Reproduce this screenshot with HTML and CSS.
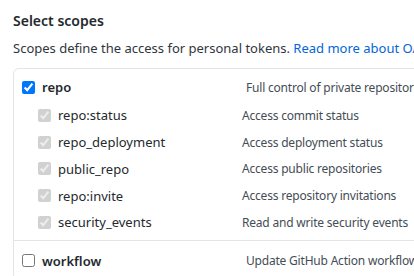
FILE: index.html
```html
<!DOCTYPE html>
<html lang="en">
<head>
  <meta charset="UTF-8">
  <meta name="viewport" content="width=device-width, initial-scale=1.0">
  <title>Select scopes</title>
  <link rel="stylesheet" href="styles.css">
</head>
<body>
  <h3 class="title">Select scopes</h3>
  <p class="note">Scopes define the access for personal tokens. <a href="#">Read more about OAuth scopes.</a></p>
  <div class="scopes">
    <div class="group">
      <div class="row top">
        <label class="name"><input type="checkbox" checked> repo</label>
        <span class="desc">Full control of private repositories</span>
      </div>
      <div class="sub">
        <div class="row">
          <label class="name"><input type="checkbox" checked disabled> repo:status</label>
          <span class="desc">Access commit status</span>
        </div>
        <div class="row">
          <label class="name"><input type="checkbox" checked disabled> repo_deployment</label>
          <span class="desc">Access deployment status</span>
        </div>
        <div class="row">
          <label class="name"><input type="checkbox" checked disabled> public_repo</label>
          <span class="desc">Access public repositories</span>
        </div>
        <div class="row">
          <label class="name"><input type="checkbox" checked disabled> repo:invite</label>
          <span class="desc">Access repository invitations</span>
        </div>
        <div class="row">
          <label class="name"><input type="checkbox" checked disabled> security_events</label>
          <span class="desc">Read and write security events</span>
        </div>
      </div>
    </div>
    <div class="group">
      <div class="row top">
        <label class="name"><input type="checkbox"> workflow</label>
        <span class="desc">Update GitHub Action workflows</span>
      </div>
    </div>
  </div>
</body>
</html>
```

FILE: styles.css
```css
body {
  font-family: "Noto Sans", "Open Sans", sans-serif;
  font-size: 13px;
  color: #24292e;
  background: #fff;
  margin: 0;
  padding: 0 0 0 13px;
  overflow: hidden;
}
.title {
  font-size: 14px;
  font-weight: 600;
  margin: 10px 0 0;
  line-height: 22px;
}
.note {
  margin: 5px 0 0;
  line-height: 22px;
  white-space: nowrap;
  color: #2f363d;
}
.note a {
  color: #0366d6;
  text-decoration: none;
}
.scopes {
  margin-top: 9px;
  width: 520px;
  border: 1px solid #e1e4e8;
  border-radius: 6px;
}
.group {
  padding: 7px 0 4px;
}
.group + .group {
  border-top: 1px solid #e1e4e8;
  padding-top: 9px;
}
.row {
  display: grid;
  grid-template-columns: 204px 1fr;
  align-items: center;
  height: 26.75px;
  padding-left: 24px;
}
.row.top {
  grid-template-columns: 224px 1fr;
  height: 22px;
  padding-left: 8px;
  margin-bottom: 4px;
}
.name {
  display: flex;
  align-items: center;
  gap: 7px;
  white-space: nowrap;
}
.top .name {
  font-weight: 600;
}
.name input {
  margin: 0;
  width: 13px;
  height: 13px;
}
.desc {
  font-size: 12px;
  letter-spacing: -0.2px;
  color: #444d56;
  white-space: nowrap;
}
```
